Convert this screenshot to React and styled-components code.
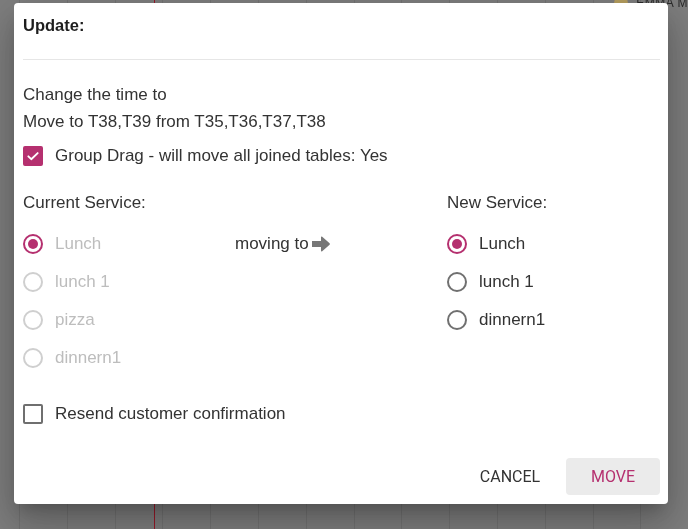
import React from "react";
import styled, { createGlobalStyle } from "styled-components";

const ACCENT = "#b5306f";

const Global = createGlobalStyle`
  html, body { margin: 0; padding: 0; }
  body { font-family: "Liberation Sans", Arial, sans-serif; width: 688px; height: 529px; overflow: hidden; }
`;

const Backdrop = styled.div`
  position: fixed;
  inset: 0;
  background-color: #7f7f7f;
  background-image:
    linear-gradient(90deg, transparent 154px, #9a1a2a 154px, #9a1a2a 155px, transparent 155px),
    repeating-linear-gradient(90deg, transparent 0, transparent 19px, #747474 19px, #747474 20px, transparent 20px, transparent 47.8px);
  display: flex;
  align-items: flex-start;
  padding: 3px 20px 0 14px;
`;

const TopRightLabel = styled.div`
  position: absolute;
  top: -4px;
  right: 0;
  font-size: 12px;
  line-height: 14px;
  color: #2a2a2a;
  letter-spacing: 0.5px;
  display: flex;
  align-items: center;
  gap: 8px;
`;

const Dot = styled.span`
  width: 14px;
  height: 14px;
  border-radius: 50%;
  background: #b8a060;
`;

const Dialog = styled.div`
  position: relative;
  width: 654px;
  height: 501px;
  background: #fff;
  border-radius: 4px;
  box-shadow: 0 11px 15px -7px rgba(0,0,0,0.2), 0 24px 38px 3px rgba(0,0,0,0.14), 0 9px 46px 8px rgba(0,0,0,0.12);
  padding: 0 8px 9px 9px;
  box-sizing: border-box;
  display: flex;
  flex-direction: column;
  color: #333;
`;

const Header = styled.div`
  padding: 13px 0 25px;
  border-bottom: 1px solid #e6e6e6;
  font-size: 16.5px;
  font-weight: 700;
  line-height: 18px;
  color: #1e1e1e;
`;

const Body = styled.div`
  padding-top: 21px;
  display: flex;
  flex-direction: column;
  flex: 1;
`;

const Line = styled.div`
  font-size: 17px;
  line-height: 27px;
  color: #333;
`;

const Row = styled.label`
  display: flex;
  align-items: center;
  gap: 12px;
  height: 38px;
  font-size: 17px;
  color: ${p => (p.$disabled ? "#bdbdbd" : "#333")};
`;

const GroupRow = styled(Row)`
  margin-top: 2px;
`;

const Box = styled.span`
  width: 20px;
  height: 20px;
  box-sizing: border-box;
  border-radius: 2px;
  display: flex;
  align-items: center;
  justify-content: center;
  background: ${p => (p.$checked ? ACCENT : "#fff")};
  border: 2px solid ${p => (p.$checked ? ACCENT : "#6f6f6f")};
`;

const Radio = styled.span`
  width: 20px;
  height: 20px;
  box-sizing: border-box;
  border-radius: 50%;
  border: 2px solid ${p => (p.$checked ? ACCENT : p.$disabled ? "#cfcfcf" : "#707070")};
  display: flex;
  align-items: center;
  justify-content: center;
  &::after {
    content: "";
    width: 10px;
    height: 10px;
    border-radius: 50%;
    background: ${p => (p.$checked ? ACCENT : "transparent")};
  }
`;

const Services = styled.div`
  margin-top: 14px;
  display: grid;
  grid-template-columns: 212px 212px 1fr;
`;

const Column = styled.div`
  display: flex;
  flex-direction: column;
`;

const ColumnTitle = styled.div`
  font-size: 17px;
  line-height: 27px;
  color: #333;
  margin-bottom: 9px;
`;

const Moving = styled.div`
  margin-top: 36px;
  height: 38px;
  display: flex;
  align-items: center;
  gap: 3px;
  font-size: 17px;
  color: #333;
`;

const ResendRow = styled(Row)`
  margin-top: 18px;
`;

const Actions = styled.div`
  margin-top: auto;
  display: flex;
  justify-content: flex-end;
  gap: 9px;
`;

const Button = styled.button`
  height: 37px;
  min-width: 94px;
  padding: 0 16px;
  border: none;
  border-radius: 4px;
  font-family: Roboto, "Liberation Sans", sans-serif;
  font-size: 16px;
  text-transform: uppercase;
  background: ${p => (p.$primary ? "#ebebeb" : "transparent")};
  color: ${p => (p.$primary ? ACCENT : "#333")};
  cursor: pointer;
`;

const Check = () => (
  <svg width="14" height="14" viewBox="0 0 24 24" fill="none" stroke="#fff" strokeWidth="3.2" strokeLinecap="round" strokeLinejoin="round">
    <path d="M4 12.5l5 5L20 7" />
  </svg>
);

const Arrow = () => (
  <svg width="18" height="16" viewBox="0 0 18 16" fill="#777">
    <path d="M0 5h9V1.3c0-.7.7-1 1.2-.5l7.4 6.5c.4.4.4 1 0 1.4l-7.4 6.5c-.5.5-1.200.2-1.2-.5V11H0z" />
  </svg>
);

const current = ["Lunch", "lunch 1", "pizza", "dinnern1"];
const next = ["Lunch", "lunch 1", "dinnern1"];

export default function App() {
  return (
    <>
      <Global />
      <Backdrop>
        <TopRightLabel><Dot />EMMA M</TopRightLabel>
        <Dialog>
          <Header>Update:</Header>
          <Body>
            <Line>Change the time to</Line>
            <Line>Move to T38,T39 from T35,T36,T37,T38</Line>
            <GroupRow>
              <Box $checked><Check /></Box>
              <span>Group Drag - will move all joined tables: Yes</span>
            </GroupRow>
            <Services>
              <Column>
                <ColumnTitle>Current Service:</ColumnTitle>
                {current.map((s, i) => (
                  <Row key={s} $disabled>
                    <Radio $checked={i === 0} $disabled />
                    <span>{s}</span>
                  </Row>
                ))}
              </Column>
              <Column>
                <Moving>moving to <Arrow /></Moving>
              </Column>
              <Column>
                <ColumnTitle>New Service:</ColumnTitle>
                {next.map((s, i) => (
                  <Row key={s}>
                    <Radio $checked={i === 0} />
                    <span>{s}</span>
                  </Row>
                ))}
              </Column>
            </Services>
            <ResendRow>
              <Box />
              <span>Resend customer confirmation</span>
            </ResendRow>
            <Actions>
              <Button>Cancel</Button>
              <Button $primary>Move</Button>
            </Actions>
          </Body>
        </Dialog>
      </Backdrop>
    </>
  );
}
